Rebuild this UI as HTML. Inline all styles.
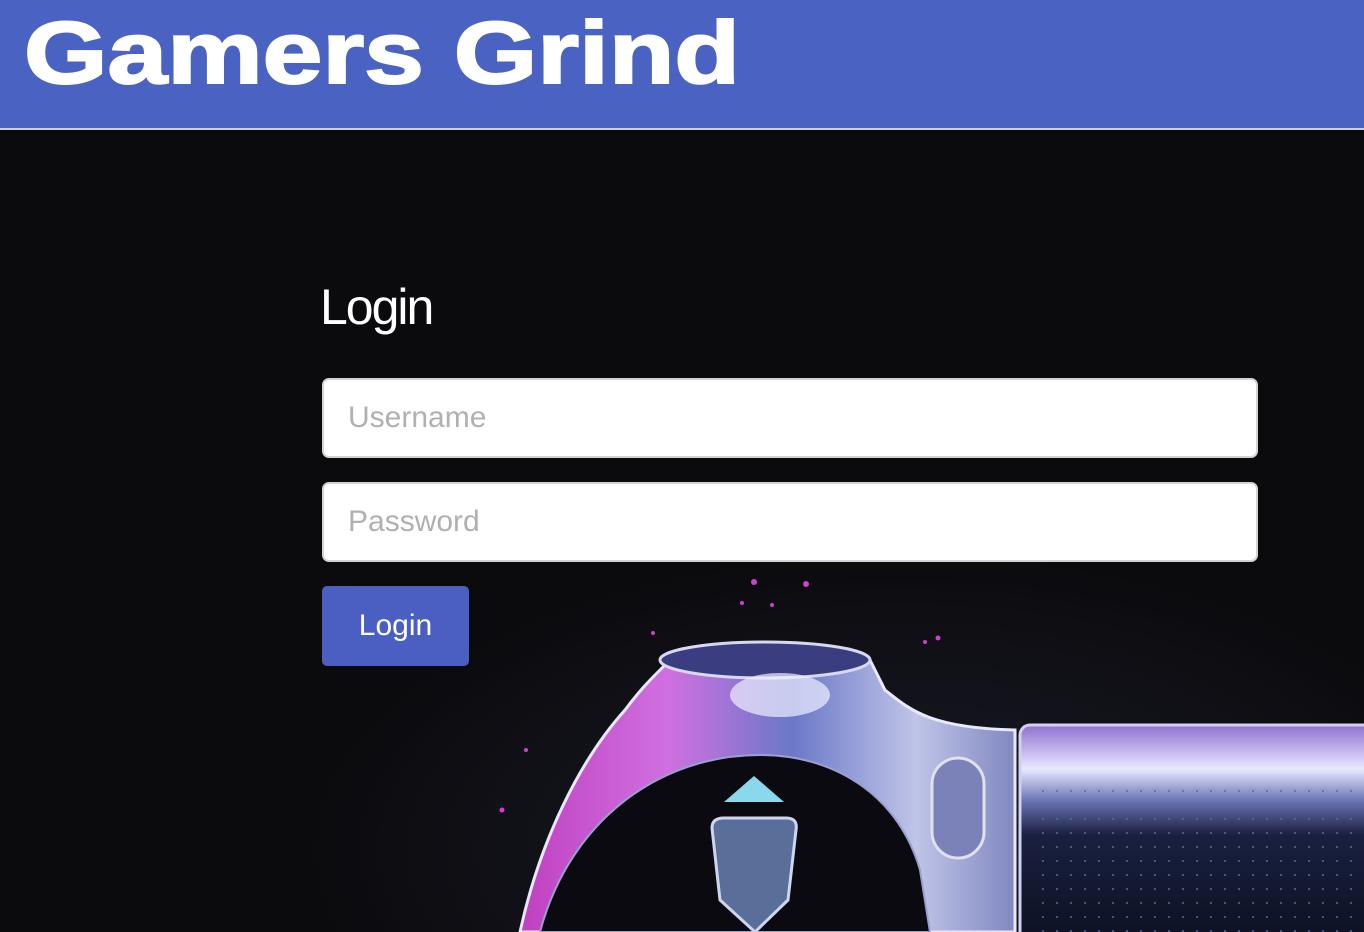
<!DOCTYPE html>
<html><head><meta charset="utf-8"><style>
*{margin:0;padding:0;box-sizing:border-box}
html{width:1364px;height:932px;overflow:hidden}
body{width:1364px;height:932px;overflow:hidden;background:#0b0b0e;font-family:"Liberation Sans",sans-serif;position:relative}
header{position:absolute;left:0;top:0;width:1364px;height:130px;background:#4a62c1;border-bottom:2px solid #d0d0d0}
.bg{position:absolute;left:0;top:130px;display:block}
h1{position:absolute;left:320px;top:278px;font-size:50px;font-weight:normal;color:#fff;letter-spacing:-2px}
.inp{position:absolute;left:322px;width:936px;height:80px;background:#fff;border:2px solid #d4d4d4;border-radius:7px;font-size:30px;color:#b0b0b0;padding-left:24px;line-height:76px}
.btn{position:absolute;left:322px;top:586px;width:147px;height:80px;background:#4a5fc1;border-radius:5px;color:#fff;font-size:30px;text-align:center;line-height:80px}
</style></head><body>
<header><svg width="1364" height="128" style="display:block"><text x="24" y="83" font-family="Liberation Sans" font-weight="bold" font-size="88" fill="#fff" textLength="716" lengthAdjust="spacingAndGlyphs" stroke="#fff" stroke-width="2">Gamers Grind</text></svg></header>
<svg class="bg" width="1364" height="802" viewBox="0 130 1364 802">
<defs>
<radialGradient id="glow" cx="0.5" cy="0.5" r="0.5"><stop offset="0" stop-color="#1a1a28"/><stop offset="1" stop-color="#0b0b0e"/></radialGradient>
<linearGradient id="body" x1="0" y1="0" x2="1" y2="0"><stop offset="0" stop-color="#c040c0"/><stop offset="0.3" stop-color="#d070e0"/><stop offset="0.55" stop-color="#6a78c8"/><stop offset="0.8" stop-color="#c0c4e8"/><stop offset="1" stop-color="#8088c0"/></linearGradient>
<linearGradient id="pad" x1="0" y1="0" x2="0" y2="1"><stop offset="0" stop-color="#9070d0"/><stop offset="0.2" stop-color="#e8e8ff"/><stop offset="0.35" stop-color="#6670b0"/><stop offset="0.5" stop-color="#1a2040"/><stop offset="1" stop-color="#0c1020"/></linearGradient>
<pattern id="dots" width="14" height="14" patternUnits="userSpaceOnUse"><circle cx="7" cy="7" r="1" fill="#5a6a9a"/></pattern>
</defs>
<ellipse cx="900" cy="850" rx="600" ry="300" fill="url(#glow)"/>
<path d="M520 932 C540 840 580 760 625 710 C640 690 650 680 658 672 L670 660 C720 640 820 640 870 660 L885 690 C910 710 930 728 1015 730 L1015 932 Z" fill="url(#body)" stroke="#e8e8ff" stroke-width="3"/>
<ellipse cx="765" cy="660" rx="105" ry="18" fill="#3a3e80" stroke="#d8d8f0" stroke-width="3"/>
<ellipse cx="780" cy="695" rx="50" ry="22" fill="#f0f0ff" opacity="0.7"/>
<path d="M540 932 C570 820 660 755 760 755 C840 755 900 800 920 870 L930 932 Z" fill="#0a0a10" stroke="#9aa0d0" stroke-width="2"/>
<path d="M724 802 L754 776 L784 802 Z" fill="#8ad8ec"/>
<path d="M712 828 Q712 818 724 818 L786 818 Q798 818 796 830 L788 900 L755 932 L720 900 Z" fill="#5a6e9a" stroke="#cdd6ee" stroke-width="3"/>
<rect x="932" y="758" width="52" height="100" rx="26" fill="#7a82b8" stroke="#e0e0f0" stroke-width="3"/>
<rect x="1020" y="725" width="360" height="220" rx="10" fill="url(#pad)" stroke="#d0d0f0" stroke-width="3"/>
<rect x="1032" y="790" width="332" height="142" fill="url(#dots)"/>
<g fill="#d040d0"><circle cx="754" cy="582" r="3"/><circle cx="806" cy="584" r="3"/><circle cx="742" cy="603" r="2"/><circle cx="653" cy="633" r="2"/><circle cx="938" cy="638" r="2.5"/><circle cx="925" cy="642" r="2"/><circle cx="502" cy="810" r="2.5"/><circle cx="526" cy="750" r="2"/><circle cx="772" cy="605" r="2"/></g>
</svg>
<h1>Login</h1>
<div class="inp" style="top:378px">Username</div>
<div class="inp" style="top:482px">Password</div>
<div class="btn">Login</div>
</body></html>
